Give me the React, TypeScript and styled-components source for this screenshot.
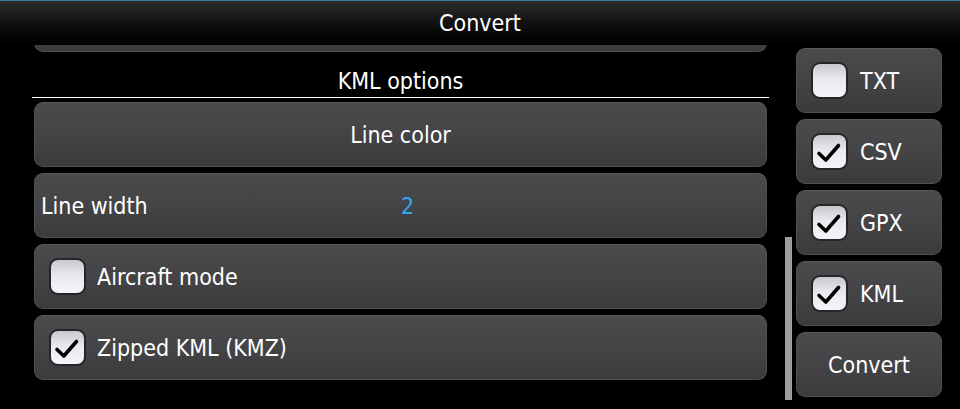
import styled, { createGlobalStyle } from 'styled-components';

const GlobalStyle = createGlobalStyle`
  html, body {
    margin: 0;
    padding: 0;
    background: #000;
  }
  body {
    font-family: 'DejaVu Sans Condensed', 'DejaVu Sans', sans-serif;
    color: #fff;
  }
`;

const Screen = styled.div`
  width: 960px;
  height: 409px;
  overflow: hidden;
  background: #000;
  display: flex;
  flex-direction: column;
`;

const TitleBar = styled.header`
  height: 44px;
  flex: none;
  border-top: 1px solid #3c7a9c;
  background: linear-gradient(to bottom, #2c2c2c, #0a0a0a 65%, #000);
  display: flex;
  align-items: center;
  justify-content: center;
  font-size: 23px;
`;

const Body = styled.div`
  flex: 1;
  min-height: 0;
  display: flex;
  padding: 0 18px 0 34px;
  overflow: hidden;
`;

const OptionsList = styled.div`
  width: 733px;
  display: flex;
  flex-direction: column;
  gap: 6px;
`;

const Card = styled.div<{ $center?: boolean }>`
  height: 65px;
  flex: none;
  box-sizing: border-box;
  border-radius: 9px;
  border: 1px solid #505053;
  border-top-color: #58585b;
  background: linear-gradient(to bottom, #4b4b4e, #434345 55%, #3b3b3d);
  display: flex;
  align-items: center;
  justify-content: ${({ $center }) => ($center ? 'center' : 'flex-start')};
  font-size: 23px;
`;

const CutCard = styled(Card)`
  margin-top: -58px;
`;

const SectionTitle = styled.div`
  height: 46px;
  flex: none;
  margin: -6px -2px -2px;
  box-sizing: border-box;
  border-bottom: 1px solid #fff;
  display: flex;
  align-items: center;
  justify-content: center;
  font-size: 23px;
  padding-top: 12px;
`;

const FieldLabel = styled.span`
  flex: 0 0 366px;
  box-sizing: border-box;
  padding-left: 6px;
`;

const FieldValue = styled.span`
  flex: 1;
  color: #2ea7ef;
`;

const CheckRow = styled(Card)`
  padding-left: 14px;
  gap: 11px;
`;

const Box = styled.span`
  width: 37px;
  height: 37px;
  flex: none;
  box-sizing: border-box;
  border: 2px solid #262628;
  border-radius: 9px;
  background: linear-gradient(to bottom, #c9c9cd, #e9e8ec 45%, #f6f4f8);
  display: flex;
  align-items: center;
  justify-content: center;
`;

const ScrollTrack = styled.div`
  width: 8px;
  margin-left: 18px;
  display: flex;
  flex-direction: column;
`;

const ScrollThumb = styled.div`
  width: 7px;
  background: #9c9c9c;
`;

const FormatColumn = styled.div`
  width: 146px;
  margin-left: 3px;
  padding-top: 3px;
  display: flex;
  flex-direction: column;
  gap: 6px;
`;

const FormatButton = styled(Card)`
  padding-left: 14px;
  gap: 12px;
`;

const Check = ({ checked }: { checked: boolean }) => (
  <Box>
    {checked && (
      <svg width="33" height="33" viewBox="0 0 33 33">
        <path
          d="M6 18.5 L12.8 25 L25.5 10.5"
          fill="none"
          stroke="#000"
          strokeWidth="3.6"
          strokeLinecap="round"
          strokeLinejoin="round"
        />
      </svg>
    )}
  </Box>
);

const formats = [
  { name: 'TXT', checked: false },
  { name: 'CSV', checked: true },
  { name: 'GPX', checked: true },
  { name: 'KML', checked: true },
];

export default function App() {
  return (
    <Screen>
      <GlobalStyle />
      <TitleBar>Convert</TitleBar>
      <Body>
        <OptionsList>
          <CutCard />
          <SectionTitle>KML options</SectionTitle>
          <Card $center>Line color</Card>
          <Card>
            <FieldLabel>Line width</FieldLabel>
            <FieldValue>2</FieldValue>
          </Card>
          <CheckRow>
            <Check checked={false} />
            Aircraft mode
          </CheckRow>
          <CheckRow>
            <Check checked />
            Zipped KML (KMZ)
          </CheckRow>
        </OptionsList>
        <ScrollTrack>
          <ScrollThumb style={{ marginTop: 192, height: 163 }} />
        </ScrollTrack>
        <FormatColumn>
          {formats.map((f) => (
            <FormatButton key={f.name}>
              <Check checked={f.checked} />
              {f.name}
            </FormatButton>
          ))}
          <Card $center>Convert</Card>
        </FormatColumn>
      </Body>
    </Screen>
  );
}
